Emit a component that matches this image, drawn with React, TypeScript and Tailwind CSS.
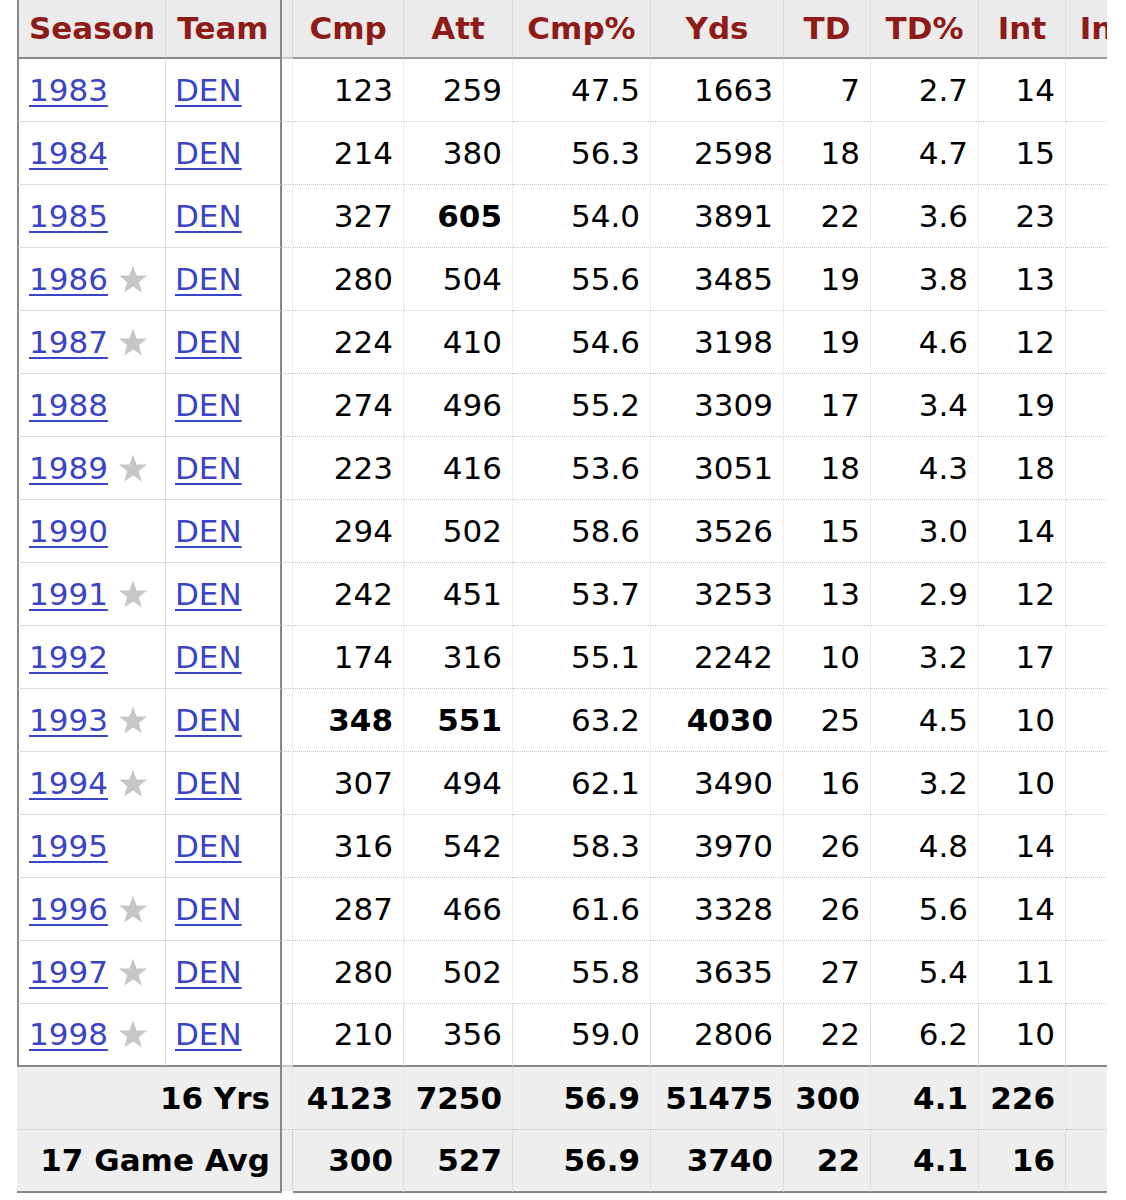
import React from "react";

type Row = { year: string; star: boolean; vals: string[] };

const raw: [string, boolean, string[]][] = [
  ["1983", false, ["123", "259", "47.5", "1663", "7", "2.7", "14"]],
  ["1984", false, ["214", "380", "56.3", "2598", "18", "4.7", "15"]],
  ["1985", false, ["327", "*605", "54.0", "3891", "22", "3.6", "23"]],
  ["1986", true, ["280", "504", "55.6", "3485", "19", "3.8", "13"]],
  ["1987", true, ["224", "410", "54.6", "3198", "19", "4.6", "12"]],
  ["1988", false, ["274", "496", "55.2", "3309", "17", "3.4", "19"]],
  ["1989", true, ["223", "416", "53.6", "3051", "18", "4.3", "18"]],
  ["1990", false, ["294", "502", "58.6", "3526", "15", "3.0", "14"]],
  ["1991", true, ["242", "451", "53.7", "3253", "13", "2.9", "12"]],
  ["1992", false, ["174", "316", "55.1", "2242", "10", "3.2", "17"]],
  ["1993", true, ["*348", "*551", "63.2", "*4030", "25", "4.5", "10"]],
  ["1994", true, ["307", "494", "62.1", "3490", "16", "3.2", "10"]],
  ["1995", false, ["316", "542", "58.3", "3970", "26", "4.8", "14"]],
  ["1996", true, ["287", "466", "61.6", "3328", "26", "5.6", "14"]],
  ["1997", true, ["280", "502", "55.8", "3635", "27", "5.4", "11"]],
  ["1998", true, ["210", "356", "59.0", "2806", "22", "6.2", "10"]],
];

const rows: Row[] = raw.map(([year, star, vals]) => ({ year, star, vals }));

const widths = [111, 109, 138, 133, 87, 108, 87, 108];
const headers = ["Cmp", "Att", "Cmp%", "Yds", "TD", "TD%", "Int", "Int%"];

const footers: [string, string[]][] = [
  ["16 Yrs", ["4123", "7250", "56.9", "51475", "300", "4.1", "226", ""]],
  ["17 Game Avg", ["300", "527", "56.9", "3740", "22", "4.1", "16", ""]],
];

function Star() {
  return (
    <svg width="30" height="29" viewBox="0 0 30 29" className="ml-[10px] shrink-0">
      <polygon
        points="15,0.5 18.6,10.4 29.2,10.6 20.8,17.1 23.8,27.4 15,21.4 6.2,27.4 9.2,17.1 0.8,10.6 11.4,10.4"
        fill="#c6c6c6"
      />
    </svg>
  );
}

export default function App() {
  return (
    <div
      className="w-[1126px] h-[1200px] bg-white overflow-hidden pl-[17px] text-[31px] text-black"
      style={{ fontFamily: '"DejaVu Sans", Verdana, sans-serif' }}
    >
      <div className="w-[1090px] overflow-hidden">
        <div className="w-[1200px]">
          {/* Header */}
          <div className="flex h-[59px] bg-[#ebebeb] font-bold text-[#8f1b18]">
            <div className="w-[149px] shrink-0 border-l-2 border-l-[#888] border-r border-r-[#dcdcdc] border-b-2 border-b-[#888] flex items-center justify-center">
              Season
            </div>
            <div className="w-[116px] shrink-0 border-r-2 border-r-[#888] border-b-2 border-b-[#888] flex items-center justify-center">
              Team
            </div>
            <div className="w-[11px] shrink-0 border-r border-r-[#d6d6d6] border-b-2 border-b-[#c8c8c8]" />
            {headers.map((h, i) => (
              <div
                key={h}
                style={{ width: widths[i] }}
                className="shrink-0 border-r border-r-[#dcdcdc] border-b-2 border-b-[#999] flex items-center justify-center whitespace-nowrap"
              >
                {h}
              </div>
            ))}
          </div>

          {/* Body */}
          {rows.map((r, ri) => {
            const last = ri === rows.length - 1;
            return (
              <div key={r.year} className="flex h-[63px] bg-white">
                <div
                  className={
                    "w-[149px] shrink-0 border-l-2 border-l-[#888] border-r border-r-[#dcdcdc] flex items-center pl-[10px] " +
                    (last ? "border-b-2 border-b-[#888]" : "border-b border-b-[#dcdcdc]")
                  }
                >
                  <a href="#" className="text-[#3a44c4] underline decoration-2 underline-offset-4">
                    {r.year}
                  </a>
                  {r.star && <Star />}
                </div>
                <div
                  className={
                    "w-[116px] shrink-0 border-r-2 border-r-[#888] flex items-center pl-[9px] " +
                    (last ? "border-b-2 border-b-[#888]" : "border-b border-b-[#dcdcdc]")
                  }
                >
                  <a href="#" className="text-[#3a44c4] underline decoration-2 underline-offset-4">
                    DEN
                  </a>
                </div>
                <div
                  className={
                    "w-[11px] shrink-0 border-r border-r-[#dcdcdc] " +
                    (last ? "border-b-2 border-b-[#c8c8c8]" : "border-b border-dotted border-b-[#c4c4c4]")
                  }
                />
                {widths.map((w, i) => {
                  const v = r.vals[i] ?? "";
                  const bold = v.startsWith("*");
                  return (
                    <div
                      key={i}
                      style={{ width: w }}
                      className={
                        "shrink-0 border-r border-r-[#dcdcdc] flex items-center justify-end pr-[10px] " +
                        (last ? "border-b-2 border-b-[#888] " : "border-b border-dotted border-b-[#c4c4c4] ") +
                        (bold ? "font-bold" : "")
                      }
                    >
                      {bold ? v.slice(1) : v}
                    </div>
                  );
                })}
              </div>
            );
          })}

          {/* Footer */}
          {footers.map(([label, vals], fi) => {
            const last = fi === footers.length - 1;
            return (
              <div key={label} className="flex h-[63px] bg-[#eeeeee] font-bold">
                <div
                  className={
                    "w-[263px] shrink-0 flex items-center justify-end pr-[10px] whitespace-nowrap " +
                    (last ? "border-b-2 border-b-[#888]" : "border-b border-dotted border-b-[#c4c4c4]")
                  }
                >
                  {label}
                </div>
                <div className={"w-[2px] shrink-0 bg-[#888] " + (last ? "mb-0" : "")} />
                <div
                  className={
                    "w-[11px] shrink-0 border-r border-r-[#d6d6d6] " +
                    (last ? "border-b-2 border-b-white" : "border-b border-dotted border-b-[#c4c4c4]")
                  }
                />
                {widths.map((w, i) => (
                  <div
                    key={i}
                    style={{ width: w }}
                    className={
                      "shrink-0 border-r border-r-[#dcdcdc] flex items-center justify-end pr-[10px] " +
                      (last ? "border-b-2 border-b-[#888]" : "border-b border-dotted border-b-[#c4c4c4]")
                    }
                  >
                    {vals[i]}
                  </div>
                ))}
              </div>
            );
          })}
        </div>
      </div>
    </div>
  );
}
